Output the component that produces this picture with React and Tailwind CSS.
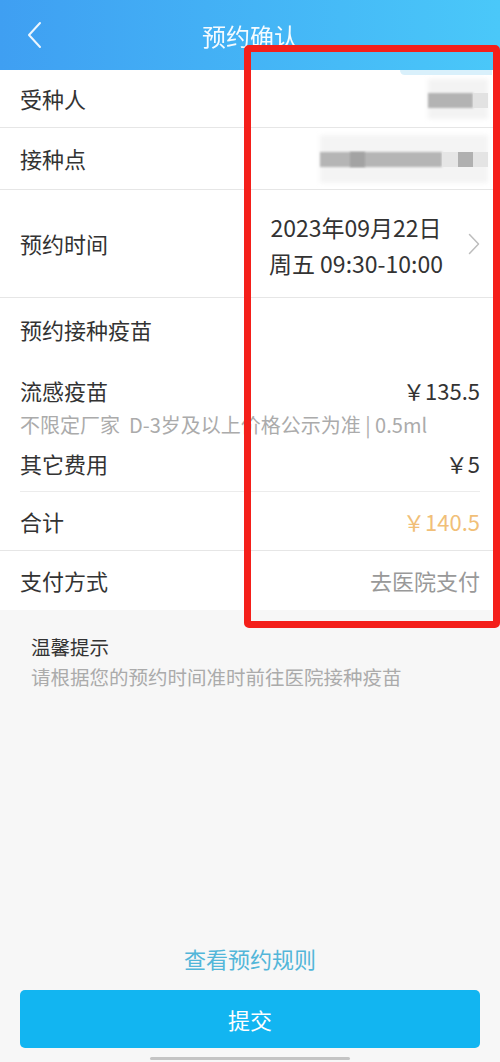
export default function App() {
  const font = { fontFamily: '"Noto Sans CJK SC", "Noto Sans", sans-serif' };
  return (
    <div className="relative w-[500px] h-[1062px] overflow-hidden bg-[#f7f7f7] flex flex-col text-[#333]" style={font}>
      {/* Header */}
      <div className="h-[70px] shrink-0 bg-gradient-to-r from-[#3f9ff2] to-[#4ac8f9] flex items-center relative">
        <div className="w-[66px] flex justify-center pl-[2px]">
          <svg width="16" height="28" viewBox="0 0 16 28" fill="none">
            <path d="M14 2 L3 14 L14 26" stroke="white" strokeWidth="2" strokeLinecap="round" strokeLinejoin="round" opacity="0.9" />
          </svg>
        </div>
        <div className="flex-1 text-center text-white text-[24px] pr-[66px] leading-none opacity-95 pt-[2px]">预约确认</div>
      </div>

      {/* White card */}
      <div className="bg-white shrink-0 relative">
        <div className="absolute right-[8px] top-0 w-[92px] h-[5px] rounded-bl-[60px] rounded-tl-[4px] bg-[#bfe6f8] opacity-60" />
        <div className="h-[58px] flex items-center justify-between px-[20px] border-b border-[#e6e6e6]">
          <span className="text-[22px]">受种人</span>
          <div className="relative w-[60px] h-[40px] mr-[-8px]">
            <div className="absolute inset-0 bg-[#f3f3f3] blur-[2px]" />
            <div className="absolute left-0 top-[14px] w-[45px] h-[15px] bg-[#b3b3b3] blur-[1px]" />
            <div className="absolute left-[45px] top-[14px] w-[15px] h-[15px] bg-[#e2e2e2]" />
          </div>
        </div>
        <div className="h-[62px] flex items-center justify-between px-[20px] border-b border-[#e6e6e6]">
          <span className="text-[22px]">接种点</span>
          <div className="relative w-[168px] h-[48px] mr-[-8px]">
            <div className="absolute inset-0 bg-[#f4f4f4] blur-[2px]" />
            <div className="absolute left-0 top-[17px] w-[122px] h-[15px] bg-[#b5b5b5] blur-[1px]" />
            <div className="absolute left-[30px] top-[17px] w-[15px] h-[15px] bg-[#a3a3a3] blur-[1px]" />
            <div className="absolute left-[122px] top-[17px] w-[16px] h-[15px] bg-[#e6e6e6]" />
            <div className="absolute left-[138px] top-[17px] w-[15px] h-[15px] bg-[#b0b0b0]" />
            <div className="absolute left-[153px] top-[17px] w-[15px] h-[15px] bg-[#e4e4e4]" />
          </div>
        </div>
        <div className="h-[108px] flex items-center justify-between pl-[20px] pr-[20px] border-b border-[#e6e6e6]">
          <span className="text-[22px]">预约时间</span>
          <div className="flex items-center gap-[25px]">
            <div className="flex flex-col items-center text-[23px] leading-[36px] pt-[2px]">
              <span>2023年09月22日</span>
              <span>周五 09:30-10:00</span>
            </div>
            <svg width="12" height="22" viewBox="0 0 12 22" fill="none">
              <path d="M1.5 1.5 L10.5 11 L1.5 20.5" stroke="#bdbdbd" strokeWidth="1.5" strokeLinecap="round" strokeLinejoin="round" />
            </svg>
          </div>
        </div>
        <div className="h-[62px] flex items-center px-[20px]">
          <span className="text-[22px]">预约接种疫苗</span>
        </div>
        <div className="pt-[15px] px-[20px]">
          <div className="h-[30px] flex items-center justify-between text-[22px]">
            <span>流感疫苗</span>
            <span>￥135.5</span>
          </div>
          <div className="mt-[9px] h-[22px] flex items-center text-[20px] text-[#ababab] whitespace-pre">不限定厂家  D-3岁及以上价格公示为准 | 0.5ml</div>
          <div className="mt-[12px] h-[30px] flex items-center justify-between text-[22px]">
            <span>其它费用</span>
            <span>￥5</span>
          </div>
          <div className="mt-[13px] border-b border-[#ececec]" />
        </div>
        <div className="h-[59px] flex items-center justify-between px-[20px] border-b border-[#e6e6e6]">
          <span className="text-[22px]">合计</span>
          <span className="text-[22px] text-[#f1bf78]">￥140.5</span>
        </div>
        <div className="h-[59px] flex items-center justify-between px-[20px]">
          <span className="text-[22px]">支付方式</span>
          <span className="text-[22px] text-[#999]">去医院支付</span>
        </div>
      </div>

      {/* Tips */}
      <div className="px-[31px] pt-[24px] flex flex-col">
        <span className="text-[19.5px] leading-[26px] text-[#333]">温馨提示</span>
        <span className="text-[19.5px] leading-[26px] mt-[4px] text-[#ababab]">请根据您的预约时间准时前往医院接种疫苗</span>
      </div>

      <div className="flex-1" />

      <div className="flex justify-center text-[22px] text-[#52b6d9] leading-[30px] mb-[17px]">查看预约规则</div>
      <div className="mx-[20px] h-[58px] rounded-[5px] bg-[#12b5f1] flex items-center justify-center text-white text-[22px]">提交</div>
      <div className="h-[14px] flex items-center justify-center">
        <div className="w-[200px] h-[3px] rounded-full bg-[#c4c4c4] mt-[6px]" />
      </div>

      {/* Red annotation box */}
      <div className="absolute left-[244px] top-[45px] w-[256px] h-[583px] border-[7px] border-[#f41f1a] rounded-[5px]" />
    </div>
  );
}
